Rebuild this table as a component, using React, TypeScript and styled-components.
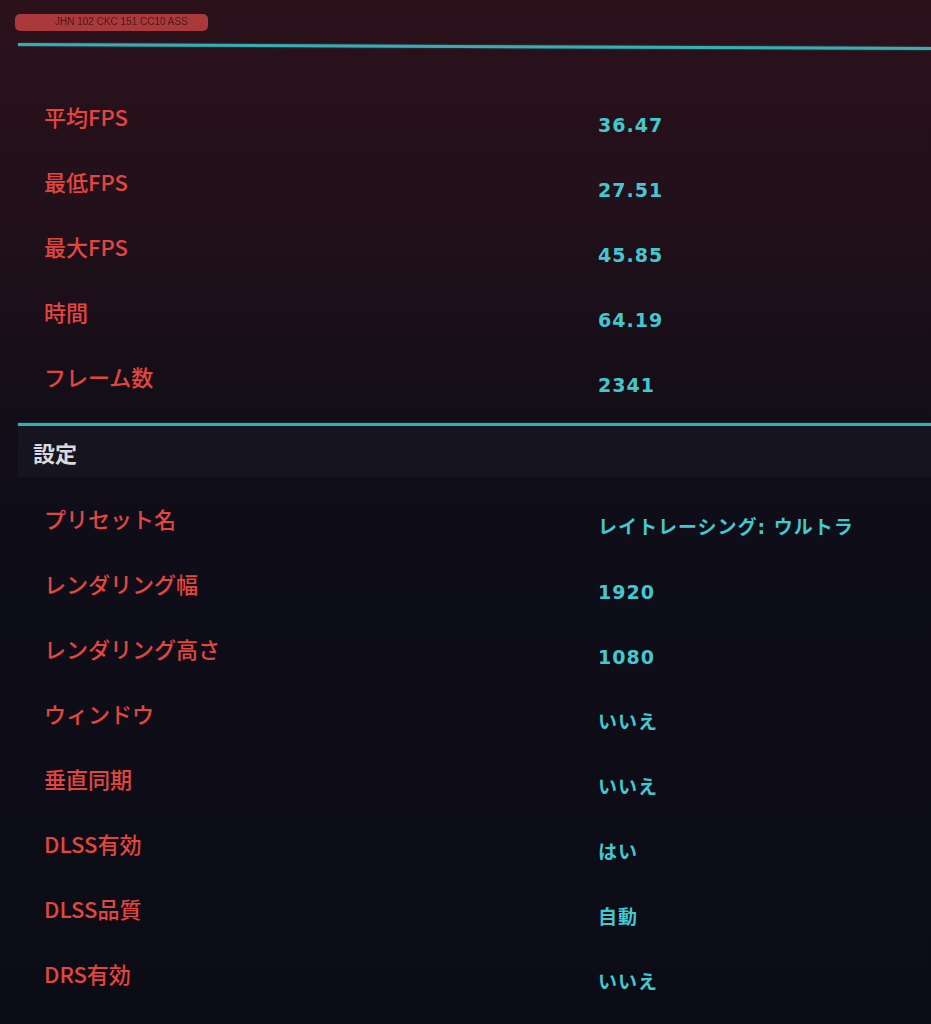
import styled, { createGlobalStyle } from "styled-components";

const GlobalStyle = createGlobalStyle`
  html, body {
    margin: 0;
    padding: 0;
    background: #0c0c16;
  }
`;

const Page = styled.div`
  width: 931px;
  min-height: 1024px;
  overflow: hidden;
  background: linear-gradient(
    180deg,
    #2b111a 0px,
    #22101a 200px,
    #170e17 360px,
    #110e18 430px,
    #0e0d18 560px,
    #0c0c16 100%
  );
  font-family: "Noto Sans CJK JP", "Noto Sans", sans-serif;
`;

const TopBar = styled.div`
  padding: 14px 0 12px 15px;
`;

const Tag = styled.div`
  width: 193px;
  height: 17px;
  border-radius: 5px;
  background: #a9393a;
  color: #4e1619;
  font-family: "Liberation Sans", sans-serif;
  font-size: 10px;
  line-height: 15px;
  padding-left: 40px;
  box-sizing: border-box;
  white-space: nowrap;
  overflow: hidden;
  filter: blur(0.4px);
`;

const Divider = styled.div<{ $tilt?: boolean }>`
  margin-left: 18px;
  height: 3px;
  background: #35aeb4;
  box-shadow: 0 0 2px rgba(60, 190, 200, 0.5);
  transform-origin: left center;
  transform: ${(p) => (p.$tilt ? "rotate(0.25deg)" : "none")};
`;

const List = styled.div<{ $top: number; $bottom: number }>`
  display: flex;
  flex-direction: column;
  padding-top: ${(p) => p.$top}px;
  padding-bottom: ${(p) => p.$bottom}px;
`;

const Row = styled.div`
  display: grid;
  grid-template-columns: 554px 1fr;
  align-items: center;
  height: 65px;
  padding-left: 44px;
`;

const Label = styled.div`
  color: #e2463f;
  font-size: 22px;
  font-weight: 500;
  line-height: 1;
  white-space: nowrap;
`;

const Value = styled.div`
  color: #43c8cf;
  font-family: "DejaVu Sans", "Noto Sans CJK JP", sans-serif;
  font-size: 19px;
  font-weight: 600;
  letter-spacing: 1px;
  line-height: 1;
  padding-top: 20px;
  white-space: nowrap;
`;

const SectionHead = styled.div`
  margin-left: 18px;
  height: 51px;
  display: flex;
  align-items: center;
  padding-left: 15px;
  background: #15141f;
  color: #dadada;
  font-size: 22px;
  font-weight: 700;
`;

const results = [
  ["平均FPS", "36.47"],
  ["最低FPS", "27.51"],
  ["最大FPS", "45.85"],
  ["時間", "64.19"],
  ["フレーム数", "2341"],
];

const settings = [
  ["プリセット名", "レイトレーシング: ウルトラ"],
  ["レンダリング幅", "1920"],
  ["レンダリング高さ", "1080"],
  ["ウィンドウ", "いいえ"],
  ["垂直同期", "いいえ"],
  ["DLSS有効", "はい"],
  ["DLSS品質", "自動"],
  ["DRS有効", "いいえ"],
];

function App() {
  return (
    <>
      <GlobalStyle />
      <Page>
        <TopBar>
          <Tag>JHN 102 CKC 151 CC10 ASS</Tag>
        </TopBar>
        <Divider $tilt />
        <List $top={37} $bottom={15}>
          {results.map(([k, v]) => (
            <Row key={k}>
              <Label>{k}</Label>
              <Value>{v}</Value>
            </Row>
          ))}
        </List>
        <Divider />
        <SectionHead>設定</SectionHead>
        <List $top={8} $bottom={0}>
          {settings.map(([k, v]) => (
            <Row key={k}>
              <Label>{k}</Label>
              <Value>{v}</Value>
            </Row>
          ))}
        </List>
      </Page>
    </>
  );
}

export default App;
